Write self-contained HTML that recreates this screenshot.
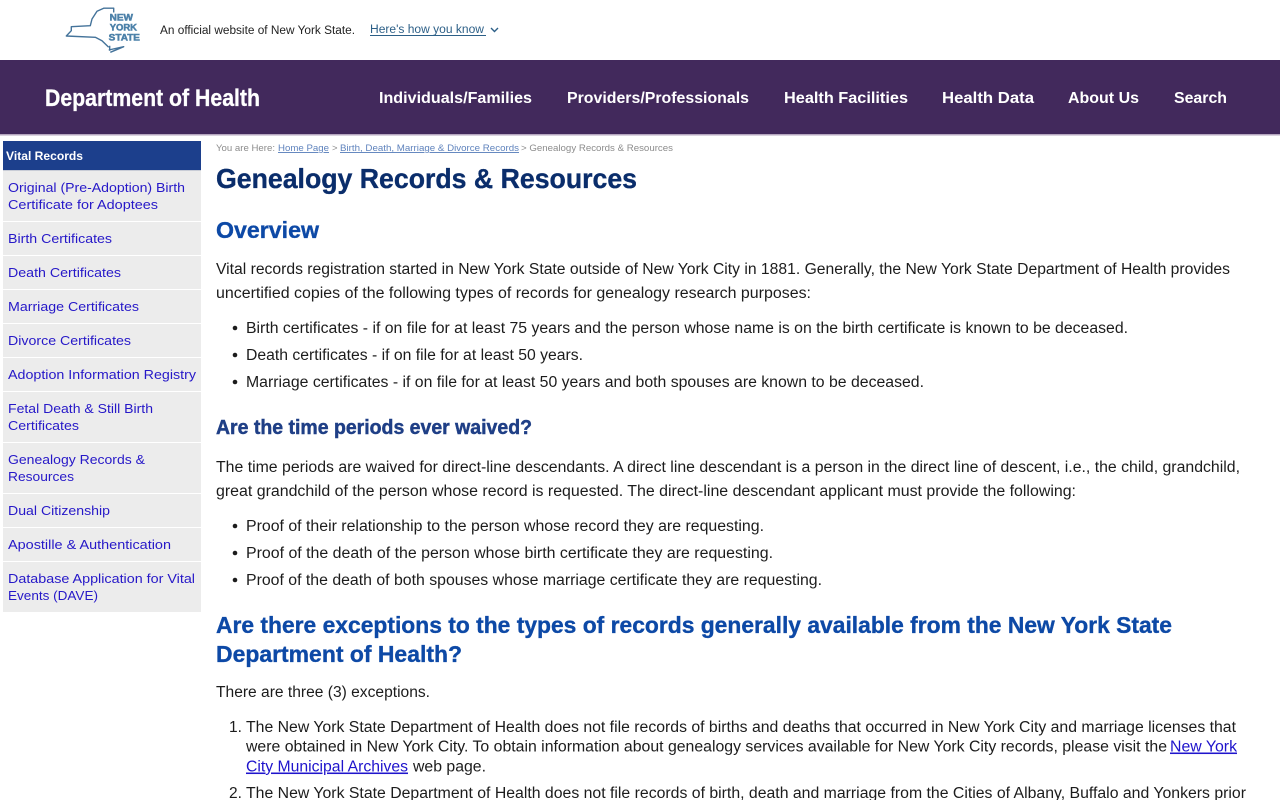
<!DOCTYPE html>
<html lang="en"><head><meta charset="utf-8"><title>Genealogy Records &amp; Resources</title>
<style>
html,body{margin:0;padding:0;background:#fff;width:1280px;height:800px;overflow:hidden}
svg{display:block}
text{font-family:"Liberation Sans",Arial,sans-serif;white-space:pre}
.b{font-size:15.5px;fill:#1c1c1c}
.s{font-size:13px;fill:#2618c8}
.n{font-size:15.5px;font-weight:700;fill:#fff}
.h2{font-size:23px;font-weight:700;fill:#0d49a6;stroke:#0d49a6;stroke-width:.35px}
.c{font-size:9.5px;fill:#8c8c8c}
.l{font-size:9.5px;fill:#5f83bd;text-decoration:underline}
.k{font-size:9.500px;font-weight:700;fill:#4c81a9;stroke:#4c81a9;stroke-width:.5px}
.u{fill:#1f14cc;text-decoration:underline}
</style></head><body>
<svg width="1280" height="800" viewBox="0 0 1280 800" xmlns="http://www.w3.org/2000/svg">
<rect width="1280" height="800" fill="#fff"/>
<!-- logo -->
<path d="M113.700 12.500 L113.700 8.200 L103.700 8.200 L97 11.300 L92 19 L90.300 25.700 L71.300 26.700 L71.300 30.700 L66.300 36 L95.300 37.300 L102 40.700 L108.700 47.300 M109.700 45.700 L109.700 50.700 M108.700 50 L123.700 46.700 L110.300 52.300" fill="none" stroke="#44739a" stroke-width="1.400" stroke-linejoin="round"/>
<text class="k" x="109.700" y="20.300" textLength="23.300" lengthAdjust="spacingAndGlyphs">NEW</text>
<text class="k" x="109.700" y="30.300" textLength="27.300" lengthAdjust="spacingAndGlyphs">YORK</text>
<text class="k" x="108.700" y="40.300" textLength="31.300" lengthAdjust="spacingAndGlyphs">STATE</text>
<text x="160" y="34" font-size="11.500" fill="#222" textLength="195" lengthAdjust="spacingAndGlyphs">An official website of New York State.</text>
<text x="370" y="33" font-size="11.500" fill="#2c5f87" textLength="114" lengthAdjust="spacingAndGlyphs">Here's how you know</text>
<rect x="370" y="35" width="116" height="1" fill="#2c5f87"/>
<path d="M491 28 L494.500 31.500 L498 28" fill="none" stroke="#2c5f87" stroke-width="1.400"/>
<!-- header -->
<rect y="60" width="1280" height="75" fill="#42295c"/>
<rect y="134" width="1280" height="1.500" fill="#b5a6bf"/>
<text x="45" y="106" font-size="24px" font-weight="700" fill="#fff" stroke="#fff" stroke-width=".3" textLength="215" lengthAdjust="spacingAndGlyphs">Department of Health</text>
<text class="n" x="379" y="103" textLength="153" lengthAdjust="spacingAndGlyphs">Individuals/Families</text>
<text class="n" x="567" y="103" textLength="182" lengthAdjust="spacingAndGlyphs">Providers/Professionals</text>
<text class="n" x="784" y="103" textLength="124" lengthAdjust="spacingAndGlyphs">Health Facilities</text>
<text class="n" x="942" y="103" textLength="92" lengthAdjust="spacingAndGlyphs">Health Data</text>
<text class="n" x="1068" y="103" textLength="71" lengthAdjust="spacingAndGlyphs">About Us</text>
<text class="n" x="1174" y="103" textLength="53" lengthAdjust="spacingAndGlyphs">Search</text>
<!-- sidebar -->
<rect x="3" y="141" width="198" height="29" fill="#1c3f8c"/>
<rect x="3" y="170" width="198" height="1" fill="#c8ccd6"/>
<text x="6" y="160" font-size="12px" font-weight="700" fill="#fff" textLength="77" lengthAdjust="spacingAndGlyphs">Vital Records</text>
<g fill="#ececec">
<rect x="3" y="171" width="198" height="50"/><rect x="3" y="222" width="198" height="33"/><rect x="3" y="256" width="198" height="33"/><rect x="3" y="290" width="198" height="33"/><rect x="3" y="324" width="198" height="33"/><rect x="3" y="358" width="198" height="33"/><rect x="3" y="392" width="198" height="50"/><rect x="3" y="443" width="198" height="50"/><rect x="3" y="494" width="198" height="33"/><rect x="3" y="528" width="198" height="33"/><rect x="3" y="562" width="198" height="50"/>
</g>
<text class="s" x="8" y="192" textLength="177" lengthAdjust="spacingAndGlyphs">Original (Pre-Adoption) Birth</text>
<text class="s" x="8" y="209" textLength="150" lengthAdjust="spacingAndGlyphs">Certificate for Adoptees</text>
<text class="s" x="8" y="243" textLength="104" lengthAdjust="spacingAndGlyphs">Birth Certificates</text>
<text class="s" x="8" y="277" textLength="113" lengthAdjust="spacingAndGlyphs">Death Certificates</text>
<text class="s" x="8" y="311" textLength="131" lengthAdjust="spacingAndGlyphs">Marriage Certificates</text>
<text class="s" x="8" y="345" textLength="123" lengthAdjust="spacingAndGlyphs">Divorce Certificates</text>
<text class="s" x="8" y="379" textLength="188" lengthAdjust="spacingAndGlyphs">Adoption Information Registry</text>
<text class="s" x="8" y="413" textLength="145" lengthAdjust="spacingAndGlyphs">Fetal Death &amp; Still Birth</text>
<text class="s" x="8" y="430" textLength="71" lengthAdjust="spacingAndGlyphs">Certificates</text>
<text class="s" x="8" y="464" textLength="137" lengthAdjust="spacingAndGlyphs">Genealogy Records &amp;</text>
<text class="s" x="8" y="481" textLength="66" lengthAdjust="spacingAndGlyphs">Resources</text>
<text class="s" x="8" y="515" textLength="102" lengthAdjust="spacingAndGlyphs">Dual Citizenship</text>
<text class="s" x="8" y="549" textLength="163" lengthAdjust="spacingAndGlyphs">Apostille &amp; Authentication</text>
<text class="s" x="8" y="583" textLength="187" lengthAdjust="spacingAndGlyphs">Database Application for Vital</text>
<text class="s" x="8" y="600" textLength="90" lengthAdjust="spacingAndGlyphs">Events (DAVE)</text>
<!-- breadcrumb -->
<text class="c" x="216" y="151" textLength="59" lengthAdjust="spacingAndGlyphs">You are Here:</text>
<text class="l" x="278" y="151" textLength="51" lengthAdjust="spacingAndGlyphs">Home Page</text>
<text class="c" x="332" y="151">&gt;</text>
<text class="l" x="340" y="151" textLength="179" lengthAdjust="spacingAndGlyphs">Birth, Death, Marriage &amp; Divorce Records</text>
<text class="c" x="521" y="151" textLength="152" lengthAdjust="spacingAndGlyphs">&gt; Genealogy Records &amp; Resources</text>
<!-- content -->
<text x="216" y="188" font-size="28px" font-weight="700" fill="#0a2d6b" stroke="#0a2d6b" stroke-width=".35" textLength="421" lengthAdjust="spacingAndGlyphs">Genealogy Records &amp; Resources</text>
<text class="h2" x="216" y="238" textLength="103" lengthAdjust="spacingAndGlyphs">Overview</text>
<text class="b" x="216" y="274" textLength="1014" lengthAdjust="spacingAndGlyphs">Vital records registration started in New York State outside of New York City in 1881. Generally, the New York State Department of Health provides</text>
<text class="b" x="216" y="298" textLength="595" lengthAdjust="spacingAndGlyphs">uncertified copies of the following types of records for genealogy research purposes:</text>
<g fill="#1c1c1c"><circle cx="235" cy="328" r="2.300"/><circle cx="235" cy="355" r="2.300"/><circle cx="235" cy="382" r="2.300"/><circle cx="235" cy="526" r="2.300"/><circle cx="235" cy="553" r="2.300"/><circle cx="235" cy="580" r="2.300"/></g>
<text class="b" x="246" y="333" textLength="882" lengthAdjust="spacingAndGlyphs">Birth certificates - if on file for at least 75 years and the person whose name is on the birth certificate is known to be deceased.</text>
<text class="b" x="246" y="360" textLength="337" lengthAdjust="spacingAndGlyphs">Death certificates - if on file for at least 50 years.</text>
<text class="b" x="246" y="387" textLength="678" lengthAdjust="spacingAndGlyphs">Marriage certificates - if on file for at least 50 years and both spouses are known to be deceased.</text>
<text x="216" y="434" font-size="20px" font-weight="700" fill="#1f3f86" stroke="#1f3f86" stroke-width=".45" textLength="316" lengthAdjust="spacingAndGlyphs">Are the time periods ever waived?</text>
<text class="b" x="216" y="472" textLength="1024" lengthAdjust="spacingAndGlyphs">The time periods are waived for direct-line descendants. A direct line descendant is a person in the direct line of descent, i.e., the child, grandchild,</text>
<text class="b" x="216" y="496" textLength="860" lengthAdjust="spacingAndGlyphs">great grandchild of the person whose record is requested. The direct-line descendant applicant must provide the following:</text>
<text class="b" x="246" y="531" textLength="518" lengthAdjust="spacingAndGlyphs">Proof of their relationship to the person whose record they are requesting.</text>
<text class="b" x="246" y="558" textLength="527" lengthAdjust="spacingAndGlyphs">Proof of the death of the person whose birth certificate they are requesting.</text>
<text class="b" x="246" y="585" textLength="576" lengthAdjust="spacingAndGlyphs">Proof of the death of both spouses whose marriage certificate they are requesting.</text>
<text class="h2" x="216" y="633" textLength="956" lengthAdjust="spacingAndGlyphs">Are there exceptions to the types of records generally available from the New York State</text>
<text class="h2" x="216" y="662" textLength="246" lengthAdjust="spacingAndGlyphs">Department of Health?</text>
<text class="b" x="216" y="697" textLength="214" lengthAdjust="spacingAndGlyphs">There are three (3) exceptions.</text>
<text class="b" x="229" y="732">1.</text>
<text class="b" x="246" y="732" textLength="990" lengthAdjust="spacingAndGlyphs">The New York State Department of Health does not file records of births and deaths that occurred in New York City and marriage licenses that</text>
<text class="b" x="246" y="751.500" textLength="921" lengthAdjust="spacingAndGlyphs">were obtained in New York City. To obtain information about genealogy services available for New York City records, please visit the</text>
<text class="b u" x="1170" y="751.500" textLength="67" lengthAdjust="spacingAndGlyphs">New York</text>
<text class="b u" x="246" y="771.500" textLength="162" lengthAdjust="spacingAndGlyphs">City Municipal Archives</text>
<text class="b" x="413" y="771.500" textLength="73" lengthAdjust="spacingAndGlyphs">web page.</text>
<text class="b" x="229" y="798">2.</text>
<text class="b" x="246" y="798" textLength="1000" lengthAdjust="spacingAndGlyphs">The New York State Department of Health does not file records of birth, death and marriage from the Cities of Albany, Buffalo and Yonkers prior</text>
</svg>
</body></html>
